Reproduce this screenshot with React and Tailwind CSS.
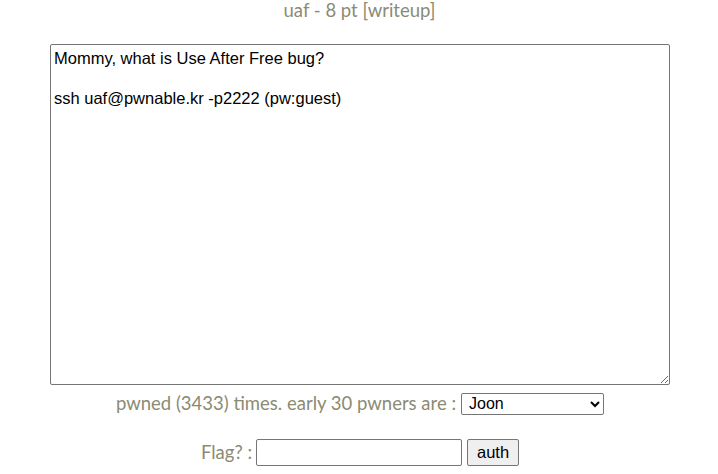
import React from "react";

export default function App() {
  const text = "Mommy, what is Use After Free bug?\n\nssh uaf@pwnable.kr -p2222 (pw:guest)";
  return (
    <div className="w-[718px] h-[474px] bg-white flex flex-col items-center text-[#8b8b73] text-[18.5px] overflow-hidden" style={{ fontFamily: "Lato, sans-serif" }}>
      <div className="leading-[22px] mt-[-1px] ml-[1px]">uaf - 8 pt [writeup]</div>
      <textarea
        readOnly
        defaultValue={text}
        className="mt-[23px] ml-[2px] w-[620px] h-[341px] border border-[#767676] rounded-[2px] px-[3px] pt-[3px] text-black text-[16.5px] leading-[20px] resize-y outline-none"
        style={{ fontFamily: "'Liberation Sans', Arial, sans-serif" }}
      />
      <div className="mt-[5px] ml-[2px] flex items-center gap-[5px]">
        <span>pwned (3433) times. early 30 pwners are :</span>
        <select
          className="w-[143px] h-[22px] border border-[#767676] rounded-[2px] text-black text-[16px] pl-[3px] bg-white"
          style={{ fontFamily: "'Liberation Sans', Arial, sans-serif" }}
          defaultValue="Joon"
        >
          <option>Joon</option>
        </select>
      </div>
      <div className="mt-[21px] ml-[2px] flex items-center gap-[4px]">
        <span>Flag? :</span>
        <input className="w-[206px] h-[27px] border border-[#767676] rounded-[2px] bg-white outline-none" />
        <button
          className="ml-[1px] w-[52px] h-[27px] border border-[#767676] rounded-[2px] bg-[#efefef] text-black text-[16.5px]"
          style={{ fontFamily: "'Liberation Sans', Arial, sans-serif" }}
        >
          auth
        </button>
      </div>
    </div>
  );
}
